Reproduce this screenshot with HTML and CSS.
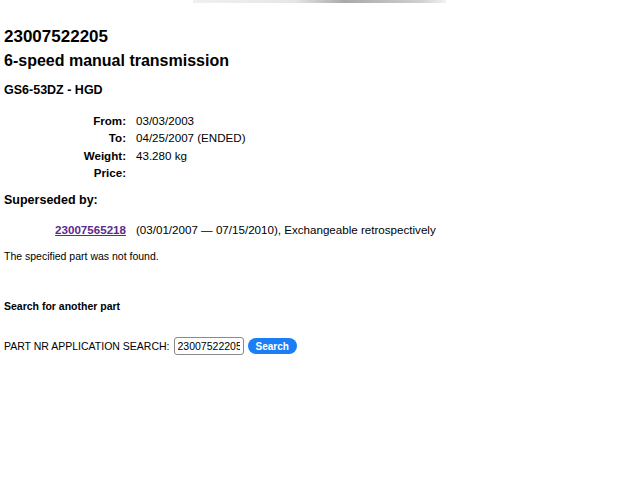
FILE: index.html
```html
<!DOCTYPE html>
<html lang="en">
<head>
    <meta charset="UTF-8">
    <title>23007522205 - 6-speed manual transmission</title>
    <link rel="stylesheet" href="styles.css">
</head>
<body>
    <div class="topbar"></div>

    <div class="page">
        <h1 class="partnr">23007522205</h1>
        <h2 class="partname">6-speed manual transmission</h2>
        <h3 class="variant">GS6-53DZ - HGD</h3>

        <div class="details">
            <span class="label">From:</span><span>03/03/2003</span>
            <span class="label">To:</span><span>04/25/2007 (ENDED)</span>
            <span class="label">Weight:</span><span>43.280 kg</span>
            <span class="label">Price:</span><span></span>
        </div>

        <h3 class="section">Superseded by:</h3>
        <div class="details superseded">
            <span class="label"><a href="#">23007565218</a></span>
            <span>(03/01/2007 &mdash; 07/15/2010), Exchangeable retrospectively</span>
        </div>

        <p class="notfound">The specified part was not found.</p>

        <h4 class="another">Search for another part</h4>

        <form class="search" onsubmit="return false">
            <label for="partnr">PART NR APPLICATION SEARCH:</label>
            <input type="text" id="partnr" value="23007522205">
            <button type="submit">Search</button>
        </form>
    </div>
</body>
</html>
```

FILE: styles.css
```css
body {
    margin: 0;
    font-family: "Liberation Sans", Arial, sans-serif;
    color: #000;
    background: #fff;
}
.topbar {
    width: 253px;
    height: 3px;
    margin-left: 193px;
    background: linear-gradient(to right, #f0f0f0, #e6e6e6 40%, #a9a9a9 60%, #cfcfcf 90%, #f2f2f2);
}
.page {
    padding: 0 4px;
}
.partnr {
    font-size: 17px;
    margin: 23px 0 0;
    line-height: 22px;
}
.partname {
    font-size: 16px;
    margin: 2px 0 0;
    line-height: 22px;
}
.variant {
    font-size: 12.5px;
    margin: 10px 0 0;
    line-height: 16px;
}
.details {
    display: grid;
    grid-template-columns: 122px auto;
    column-gap: 10px;
    row-gap: 2px;
    font-size: 11.6px;
    line-height: 15.3px;
    margin-top: 15px;
}
.label {
    text-align: right;
    font-weight: bold;
}
.section {
    font-size: 12.5px;
    margin: 12px 0 0;
    line-height: 16px;
}
.superseded {
    margin-top: 14px;
}
.superseded a {
    color: #5a2a8c;
}
.notfound {
    font-size: 10.5px;
    margin: 13px 0 0;
}
.another {
    font-size: 10.5px;
    margin: 38px 0 0;
}
.search {
    display: flex;
    align-items: center;
    margin-top: 25px;
    font-size: 10.5px;
}
.search input {
    box-sizing: border-box;
    width: 70px;
    height: 18px;
    margin-left: 4px;
    padding: 0 3px;
    border: 1px solid #8a8a8a;
    border-radius: 3px;
    font-family: "Liberation Sans", Arial, sans-serif;
    font-size: 10.5px;
}
.search button {
    margin-left: 4px;
    height: 16px;
    padding: 0 8px;
    border: none;
    border-radius: 8px;
    background: #1a7ff6;
    color: #fff;
    font-family: "Liberation Sans", Arial, sans-serif;
    font-weight: bold;
    font-size: 10px;
}
```
